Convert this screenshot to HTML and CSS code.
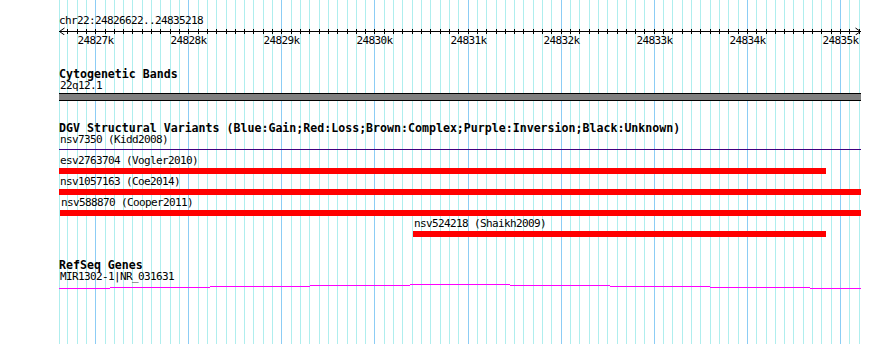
FILE: index.html
```html
<!DOCTYPE html>
<html lang="en">
<head>
  <meta charset="UTF-8" />
  <meta name="viewport" content="width=device-width, initial-scale=1.0" />
  <title>chr22:24826622..24835218</title>
  <link rel="stylesheet" href="styles.css">
</head>
<body>
<div class="browser">
  <svg class="grid" id="grid" width="802" height="344"></svg>

  <div class="ruler">
    <div class="ruler-title">chr22:24826622..24835218</div>
    <svg class="axis" id="axis" width="802" height="8"></svg>
    <div class="tick-labels" id="tickLabels"></div>
  </div>

  <div class="track">
    <div class="track-title">Cytogenetic Bands</div>
    <div class="feature" data-start="24820000" data-end="24840000">
      <div class="feature-label">22q12.1</div>
      <div class="band-bar"></div>
    </div>
  </div>

  <div class="track track-dgv">
    <div class="track-title">DGV Structural Variants (Blue:Gain;Red:Loss;Brown:Complex;Purple:Inversion;Black:Unknown)</div>
    <div class="feature-row">
      <div class="feature" data-start="24820000" data-end="24840000">
        <div class="feature-label">nsv7350 (Kidd2008)</div>
        <div class="sv-line"></div>
      </div>
    </div>
    <div class="feature-row">
      <div class="feature" data-start="24820000" data-end="24834850">
        <div class="feature-label">esv2763704 (Vogler2010)</div>
        <div class="sv-bar"></div>
      </div>
    </div>
    <div class="feature-row">
      <div class="feature" data-start="24820000" data-end="24840000">
        <div class="feature-label">nsv1057163 (Coe2014)</div>
        <div class="sv-bar"></div>
      </div>
    </div>
    <div class="feature-row">
      <div class="feature" data-start="24826622" data-end="24840000">
        <div class="feature-label">nsv588870 (Cooper2011)</div>
        <div class="sv-bar"></div>
      </div>
    </div>
    <div class="feature-row">
      <div class="feature" data-start="24830414" data-end="24834850">
        <div class="feature-label">nsv524218 (Shaikh2009)</div>
        <div class="sv-bar"></div>
      </div>
    </div>
  </div>

  <div class="track track-genes">
    <div class="track-title">RefSeq Genes</div>
    <div class="feature" data-start="24820000" data-end="24840000">
      <div class="feature-label">MIR1302-1|NR_031631</div>
      <svg class="gene-hat" width="802" height="5">
        <path d="M0 4.5H51M51 3.5H151M151 2.5H251M251 1.5H351M351 0.5H451M451 1.5H551M551 2.5H651M651 3.5H751M751 4.5H802" />
      </svg>
    </div>
  </div>
</div>

<script>
  const START = 24826622;
  const END = 24835218;
  const WIDTH = 802;
  const PX_PER_BP = 0.0931;
  const SVG_NS = 'http://www.w3.org/2000/svg';

  const toX = p => 1 + (p - START) * PX_PER_BP;

  function rect(parent, x, y, w, h, cls) {
    const r = document.createElementNS(SVG_NS, 'rect');
    r.setAttribute('x', x);
    r.setAttribute('y', y);
    r.setAttribute('width', w);
    r.setAttribute('height', h);
    if (cls) r.setAttribute('class', cls);
    parent.appendChild(r);
  }

  // grid lines + ruler ticks every 100bp
  const grid = document.getElementById('grid');
  const axis = document.getElementById('axis');
  const labels = document.getElementById('tickLabels');

  for (let p = 24826600; p <= END; p += 100) {
    const x = Math.min(WIDTH - 1, Math.max(0, Math.round(toX(p))));
    const major = p % 1000 === 0;
    rect(grid, x, 0, 1, 344, major ? 'grid-major' : 'grid-minor');
    if (p > START) rect(axis, x, 2, 1, 5);
    if (major) {
      const lab = document.createElement('span');
      lab.className = 'tick-label';
      lab.style.left = (x + 0.5) + 'px';
      lab.textContent = (p / 1000) + 'k';
      labels.appendChild(lab);
    }
  }

  rect(axis, 0, 4, WIDTH, 1);
  axis.insertAdjacentHTML('beforeend',
    '<path class="arrow" d="M5.5 1L0.5 4.5L5.5 8" />' +
    '<path class="arrow" d="M796.5 1L801.5 4.5L796.5 8" />');

  // place features from their coordinates
  document.querySelectorAll('.feature').forEach(el => {
    const s = +el.dataset.start;
    const e = +el.dataset.end;
    const left = s < START ? 0 : Math.round(toX(s));
    const right = e > END ? WIDTH : Math.round(toX(e));
    el.style.marginLeft = left + 'px';
    el.style.width = (right - left) + 'px';
  });
</script>
</body>
</html>
```

FILE: styles.css
```css
* {
  box-sizing: border-box;
}
body {
  margin: 0;
  background-color: #fff;
  color: #000;
  font-family: "DejaVu Sans Mono", "Liberation Mono", monospace;
  font-size: 11px;
  letter-spacing: -0.62px;
}
.browser {
  position: relative;
  width: 802px;
  height: 344px;
  margin-left: 59px;
  padding-top: 15px;
}
.grid {
  position: absolute;
  top: 0;
  left: 0;
}
.grid-minor {
  fill: #afeeee;
}
.grid-major {
  fill: #8ccdf5;
}
.ruler {
  position: relative;
}
.ruler-title {
  height: 12px;
  line-height: 12px;
}
.axis {
  display: block;
  fill: #000;
}
.axis .arrow {
  fill: none;
  stroke: #000;
  stroke-width: 1;
}
.tick-labels {
  position: relative;
  height: 12px;
  line-height: 12px;
}
.tick-label {
  position: absolute;
  top: 0;
  transform: translateX(-50%);
  white-space: nowrap;
}
.track {
  position: relative;
  margin-top: 22px;
}
.track-genes {
  margin-top: 21px;
}
.track-title {
  height: 11px;
  line-height: 11px;
  font-size: 11.6px;
  font-weight: bold;
  letter-spacing: 0;
  white-space: nowrap;
}
.feature-label {
  height: 12px;
  line-height: 12px;
  padding-left: 1px;
  white-space: nowrap;
}
.band-bar {
  margin-top: 1px;
  height: 8px;
  background-color: #808080;
  border-top: 1px solid #000;
  border-bottom: 1px solid #000;
}
.feature-row {
  height: 21px;
}
.sv-bar {
  margin-top: 1px;
  height: 6px;
  background-color: #ff0000;
}
.sv-line {
  margin-top: 3px;
  height: 1px;
  background-color: #400080;
}
.gene-hat {
  display: block;
  margin-top: 1px;
}
.gene-hat path {
  fill: none;
  stroke: #ff00ff;
  stroke-width: 1;
}
```
